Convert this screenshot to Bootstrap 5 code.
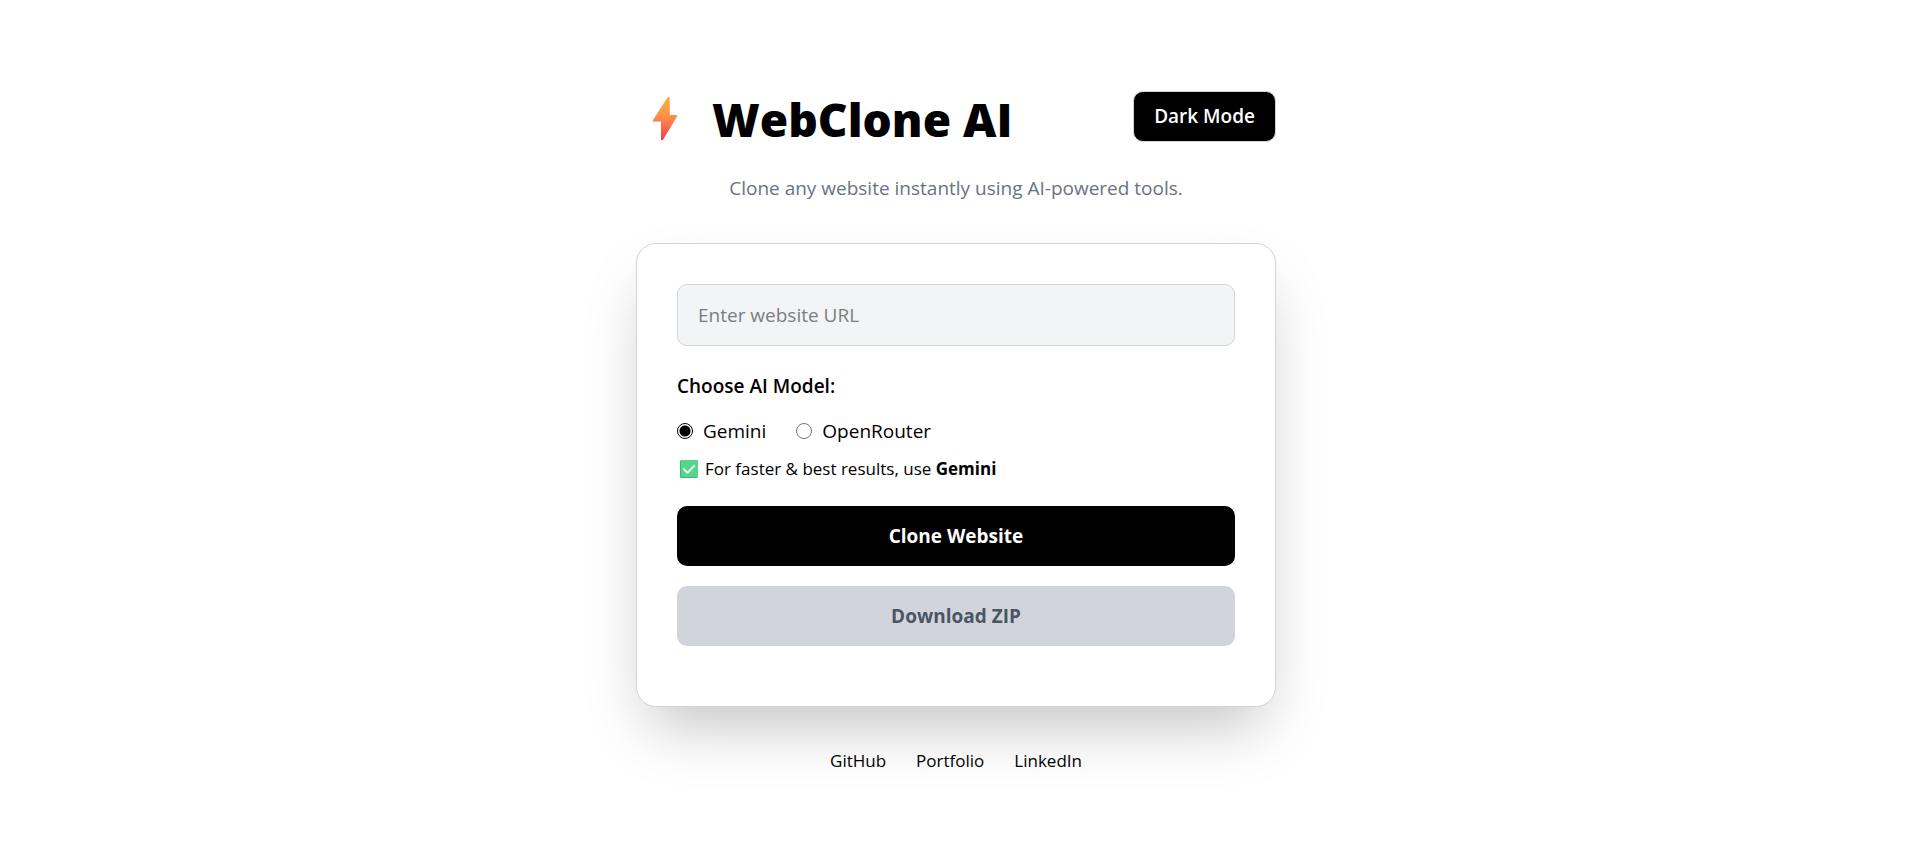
<!DOCTYPE html>
<html lang="en">
<head>
<meta charset="utf-8">
<meta name="viewport" content="width=device-width, initial-scale=1">
<title>WebClone AI</title>
<link href="https://cdn.jsdelivr.net/npm/bootstrap@5.3.0/dist/css/bootstrap.min.css" rel="stylesheet">
<style>
  body { font-family: "Segoe UI", "Open Sans", "Noto Sans", sans-serif; font-size: 19px; line-height: 30px; color: #000; background: #fff; }
  .page-shell { padding: 24px 16px 16px 22px; }
  .page-column { max-width: 640px; }
  .brand-title { font-size: 46px; line-height: 56px; font-weight: 800; gap: 34px; padding-left: 16px; }
  .brand-title svg { width: 26px; height: 44px; }
  .theme-btn { --bs-btn-font-size: 19px; --bs-btn-line-height: 29px; --bs-btn-font-weight: 600; --bs-btn-padding-x: 20px; --bs-btn-padding-y: 10px; --bs-btn-border-radius: 10px; border-color: #d1d5db; }
  .tagline { color: #6b7280; margin: 26px 0 40px; }
  .clone-card { padding: 40px 40px 60px; border: 1px solid #d1d5db; border-radius: 20px; box-shadow: 0 31px 63px -15px rgba(0, 0, 0, .25); }
  .url-input, .url-input:focus { font-size: 19px; line-height: 30px; padding: 15px 20px; border: 1px solid #d1d5db; border-radius: 10px; background: #f3f4f6; }
  .url-input::placeholder { color: #7b7d82; }
  .model-title { font-size: 19px; line-height: 30px; font-weight: 600; margin: 25px 0 15px; }
  .model-options { gap: 30px; }
  .model-option { gap: 10px; }
  .model-option input { appearance: none; width: 16px; height: 16px; margin: 0; border: 1px solid #767676; border-radius: 50%; background: #fff; }
  .model-option input:checked { border: 1px solid #000; background: radial-gradient(circle, #000 0 5px, #fff 6px); }
  .hint { font-size: 17px; line-height: 25px; margin: 10px 0 25px; gap: 7px; padding-left: 3px; }
  .hint svg { width: 18px; height: 18px; }
  .action-list { gap: 20px; }
  .action-btn { --bs-btn-font-size: 19px; --bs-btn-line-height: 30px; --bs-btn-font-weight: 700; --bs-btn-padding-y: 15px; --bs-btn-border-radius: 10px; --bs-btn-border-width: 0; --bs-btn-disabled-opacity: 1; }
  .btn-black { --bs-btn-color: #fff; --bs-btn-bg: #000; --bs-btn-hover-color: #fff; --bs-btn-hover-bg: #1f2937; }
  .btn-muted { --bs-btn-disabled-color: #4b5563; --bs-btn-disabled-bg: #d1d5db; }
  .site-links { font-size: 17px; line-height: 25px; gap: 30px; margin-top: 41px; }
  .site-links a { color: #000; text-decoration: none; }
</style>
</head>
<body>
<div class="page-shell min-vh-100 d-flex align-items-center justify-content-center">
  <div class="page-column w-100">
    <header>
      <div class="d-flex flex-wrap justify-content-between align-items-start">
        <h1 class="brand-title d-flex align-items-center mb-0">
          <svg viewBox="0 0 26 44" aria-hidden="true">
            <defs><linearGradient id="bolt" x1="0" y1="0" x2="0" y2="1"><stop offset="0" stop-color="#fcb041"/><stop offset=".45" stop-color="#ff9048"/><stop offset="1" stop-color="#f03a50"/></linearGradient></defs>
            <path d="M15.2 .8Q15.8 0 16.8 0T17.8 1V18H24.5Q25.8 18.3 25 19.5L11.2 42.4Q10.5 43.3 9.6 43.3T9 42V24.6H1.5Q.4 24.2 1 23Z" fill="url(#bolt)"/>
          </svg>
          <span>WebClone AI</span>
        </h1>
        <button type="button" class="btn btn-black theme-btn">Dark Mode</button>
      </div>
      <p class="tagline text-center">Clone any website instantly using AI-powered tools.</p>
    </header>
    <main class="clone-card bg-white">
      <form>
        <input type="url" class="form-control url-input" placeholder="Enter website URL" aria-label="Website URL">
        <fieldset>
          <legend class="model-title">Choose AI Model:</legend>
          <div class="model-options d-flex flex-wrap">
            <label class="model-option d-flex align-items-center" for="gemini"><input type="radio" id="gemini" name="model" checked>Gemini</label>
            <label class="model-option d-flex align-items-center" for="openrouter"><input type="radio" id="openrouter" name="model">OpenRouter</label>
          </div>
        </fieldset>
        <p class="hint d-flex align-items-center">
          <svg viewBox="0 0 18 18" aria-hidden="true"><rect width="18" height="18" rx="1.5" fill="#35b87a"/><rect x="1" width="17" height="17" rx="1" fill="#55d68c"/><path d="M3.8 9.2l3.6 3.6 7-7.2" fill="none" stroke="#fff" stroke-width="1.7" stroke-linecap="round" stroke-linejoin="round"/></svg>
          <span>For faster &amp; best results, use <strong>Gemini</strong></span>
        </p>
        <div class="action-list d-grid">
          <button type="button" class="btn btn-black action-btn">Clone Website</button>
          <button type="button" class="btn btn-muted action-btn" disabled>Download ZIP</button>
        </div>
      </form>
    </main>
    <footer class="site-links d-flex flex-wrap justify-content-center">
      <a href="#">GitHub</a>
      <a href="#">Portfolio</a>
      <a href="#">LinkedIn</a>
    </footer>
  </div>
</div>
<script src="https://cdn.jsdelivr.net/npm/bootstrap@5.3.0/dist/js/bootstrap.bundle.min.js"></script>
</body>
</html>
